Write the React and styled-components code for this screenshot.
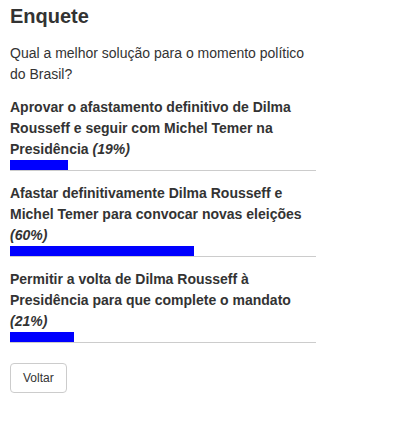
import styled, { createGlobalStyle } from "styled-components";

const GlobalStyle = createGlobalStyle`
  body {
    margin: 0;
    background: #fff;
    font-family: "Liberation Sans", Arial, sans-serif;
    color: #333;
  }
`;

const options = [
  {
    text: "Aprovar o afastamento definitivo de Dilma Rousseff e seguir com Michel Temer na Presidência",
    percent: 19,
  },
  {
    text: "Afastar definitivamente Dilma Rousseff e Michel Temer para convocar novas eleições",
    percent: 60,
  },
  {
    text: "Permitir a volta de Dilma Rousseff à Presidência para que complete o mandato",
    percent: 21,
  },
];

const Poll = styled.div`
  width: 306px;
  padding: 5px 0 0 10px;
`;

const Title = styled.h3`
  margin: 0;
  font-size: 20px;
  line-height: 22px;
  font-weight: bold;
  color: #333;
`;

const Question = styled.p`
  margin: 16px 0 0;
  font-size: 14px;
  line-height: 21px;
`;

const Option = styled.div`
  margin-top: 12px;
  border-bottom: 1px solid #ccc;
`;

const Label = styled.div`
  font-size: 14px;
  line-height: 21px;
  font-weight: bold;
  color: #333;

  em {
    font-style: italic;
  }
`;

const Bar = styled.div`
  height: 10px;
  background: #0000ff;
`;

const Button = styled.button`
  margin-top: 20px;
  padding: 5px 12px;
  font-family: inherit;
  font-size: 12px;
  line-height: 18px;
  color: #333;
  background: #fff;
  border: 1px solid #ccc;
  border-radius: 4px;
  cursor: pointer;
`;

export default function App() {
  return (
    <>
      <GlobalStyle />
      <Poll>
        <Title>Enquete</Title>
        <Question>Qual a melhor solução para o momento político do Brasil?</Question>
        {options.map((o) => (
          <Option key={o.percent}>
            <Label>
              {o.text} <em>({o.percent}%)</em>
            </Label>
            <Bar style={{ width: `${o.percent}%` }} />
          </Option>
        ))}
        <Button>Voltar</Button>
      </Poll>
    </>
  );
}
